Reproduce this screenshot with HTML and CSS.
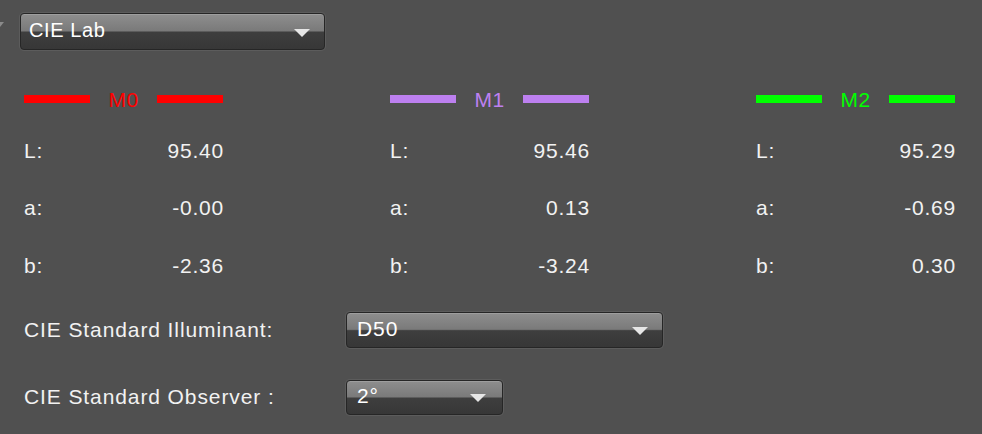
FILE: index.html
```html
<!DOCTYPE html>
<html>
<head>
<meta charset="utf-8">
<link rel="stylesheet" href="styles.css">
</head>
<body>
<div class="panel">
  <div class="header">
    <span class="disclosure"></span>
    <div class="select select-space"><span class="select-text">CIE Lab</span><span class="arrow"></span></div>
  </div>

  <div class="columns">
    <div class="col">
      <div class="legend m0"><span class="bar"></span><span class="tag">M0</span><span class="bar"></span></div>
      <div class="row"><span>L:</span><span>95.40</span></div>
      <div class="row"><span>a:</span><span>-0.00</span></div>
      <div class="row"><span>b:</span><span>-2.36</span></div>
    </div>
    <div class="col">
      <div class="legend m1"><span class="bar"></span><span class="tag">M1</span><span class="bar"></span></div>
      <div class="row"><span>L:</span><span>95.46</span></div>
      <div class="row"><span>a:</span><span>0.13</span></div>
      <div class="row"><span>b:</span><span>-3.24</span></div>
    </div>
    <div class="col">
      <div class="legend m2"><span class="bar"></span><span class="tag">M2</span><span class="bar"></span></div>
      <div class="row"><span>L:</span><span>95.29</span></div>
      <div class="row"><span>a:</span><span>-0.69</span></div>
      <div class="row"><span>b:</span><span>0.30</span></div>
    </div>
  </div>

  <div class="settings">
    <div class="setting">
      <span class="setting-label">CIE Standard Illuminant:</span>
      <div class="select select-illum"><span class="select-text">D50</span><span class="arrow"></span></div>
    </div>
    <div class="setting">
      <span class="setting-label">CIE Standard Observer :</span>
      <div class="select select-obs"><span class="select-text">2°</span><span class="arrow"></span></div>
    </div>
  </div>
</div>
</body>
</html>
```

FILE: styles.css
```css
html, body {
  margin: 0;
  padding: 0;
  background: #505050;
}

.panel {
  width: 982px;
  height: 434px;
  font-family: "Liberation Sans", Arial, sans-serif;
  color: #f2f2f2;
  overflow: hidden;
}

/* Top row: disclosure triangle and colour-space selector */
.header {
  display: flex;
  align-items: flex-start;
  padding-top: 13px;
}

.disclosure {
  width: 0;
  height: 0;
  margin-top: 9px;
  border-left: 4px solid transparent;
  border-right: 4px solid transparent;
  border-top: 5px solid #8a8a8a;
  margin-left: -4px;
  margin-right: 16px;
}

/* Glossy popup button */
.select {
  position: relative;
  box-sizing: border-box;
  display: flex;
  align-items: center;
  justify-content: space-between;
  border: 1px solid #262626;
  border-radius: 4px;
  background: linear-gradient(to bottom, #8e8e8e 0%, #7a7a7a 48%, #3e3e3e 52%, #373737 100%);
  box-shadow: 0 0 0 1px rgba(255, 255, 255, 0.07), inset 0 1px 0 rgba(255, 255, 255, 0.15);
  font-size: 20px;
  color: #ffffff;
  padding: 0 14px 0 8px;
}

.select-text {
  line-height: 1;
  margin-top: -3px;
  letter-spacing: 0.6px;
}

.arrow {
  width: 0;
  height: 0;
  border-left: 8px solid transparent;
  border-right: 8px solid transparent;
  border-top: 8px solid #e6e6e6;
  margin-top: 2px;
}

.select-space {
  width: 305px;
  height: 37px;
}

.select-illum {
  width: 317px;
  height: 36px;
  padding-left: 10px;
  font-size: 21px;
}

.select-obs {
  width: 157px;
  height: 35px;
  padding-left: 10px;
  padding-right: 16px;
  font-size: 21px;
}

.select-illum .select-text,
.select-obs .select-text {
  letter-spacing: 0.9px;
}

/* Three measurement columns */
.columns {
  display: grid;
  grid-template-columns: repeat(3, 200px);
  column-gap: 166px;
  padding-left: 24px;
  margin-top: 34px;
}

.col {
  display: flex;
  flex-direction: column;
}

.legend {
  display: flex;
  align-items: center;
  height: 30px;
  gap: 18px;
}

.bar {
  width: 66px;
  height: 8px;
}

.tag {
  font-size: 21px;
  letter-spacing: 0.5px;
  width: 31px;
  text-align: center;
  line-height: 1;
}

.m0 .bar { background: #ff0000; }
.m0 .tag { color: #ff0000; }
.m1 .bar { background: #bd80f0; }
.m1 .tag { color: #bd80f0; }
.m2 .bar { background: #00ff00; }
.m2 .tag { color: #00ff00; }

.row {
  display: flex;
  justify-content: space-between;
  align-items: center;
  height: 57.5px;
  font-size: 21px;
  letter-spacing: 0.8px;
}

.legend + .row {
  margin-top: 8px;
}

/* Illuminant / observer settings */
.settings {
  display: flex;
  flex-direction: column;
  padding-left: 24px;
  margin-top: 17px;
  gap: 32px;
}

.setting {
  display: flex;
  align-items: center;
}

.setting-label {
  width: 322px;
  font-size: 21px;
  letter-spacing: 0.9px;
}
```
